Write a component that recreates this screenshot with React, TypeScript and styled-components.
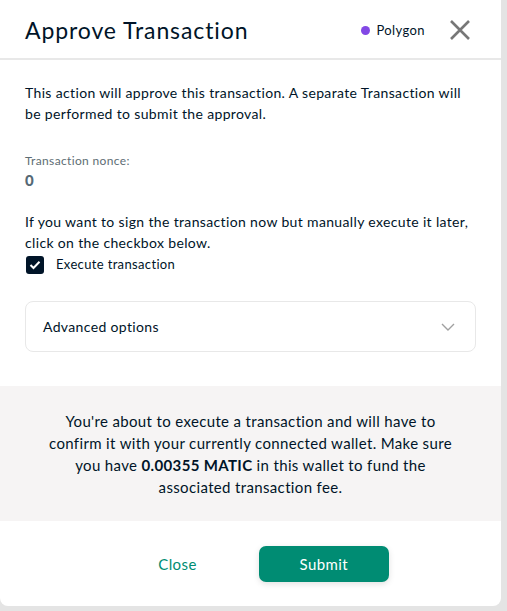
import React from 'react';
import styled, { createGlobalStyle } from 'styled-components';

const GlobalStyle = createGlobalStyle`
    html, body {
        margin: 0;
        padding: 0;
        background: #e4e4e4;
        font-family: Lato, "Open Sans", sans-serif;
        color: #001428;
    }
`;

const Page = styled.div`
    width: 507px;
    height: 611px;
    overflow: hidden;
`;

const Modal = styled.div`
    width: 501px;
    height: 606px;
    background: #fff;
    border-radius: 0 0 8px 8px;
    display: flex;
    flex-direction: column;
`;

const Header = styled.div`
    height: 56px;
    display: flex;
    align-items: center;
    padding: 2px 30px 0 25px;
    border-bottom: 2px solid #e8e8e8;
`;

const Title = styled.h1`
    flex: 1;
    margin: 0;
    font-size: 23px;
    font-weight: 400;
    letter-spacing: 0.9px;
`;

const Network = styled.div`
    display: flex;
    align-items: center;
    gap: 6px;
    font-size: 13px;
    letter-spacing: 0.4px;
    margin-right: 24px;
`;

const Dot = styled.span`
    width: 9px;
    height: 9px;
    border-radius: 50%;
    background: #8248e5;
`;

const CloseIcon = styled.button`
    border: 0;
    background: none;
    padding: 0;
    width: 22px;
    height: 22px;
    display: flex;
    cursor: pointer;
`;

const Body = styled.div`
    padding: 22px 25px 34px;
    font-size: 14px;
    line-height: 21px;
    letter-spacing: 0.35px;
`;

const Paragraph = styled.p`
    margin: 0;
`;

const Label = styled.div`
    margin-top: 28px;
    font-size: 12px;
    color: #5d6d74;
    line-height: 18px;
`;

const Nonce = styled.div`
    font-weight: 900;
    color: #566976;
    font-size: 15px;
    margin-bottom: 20px;
`;

const CheckRow = styled.label`
    display: flex;
    align-items: center;
    gap: 12px;
    margin-top: 1px;
    font-size: 13px;
`;

const Box = styled.span`
    width: 18px;
    height: 18px;
    margin-left: 1px;
    border-radius: 3px;
    background: #001428;
    display: flex;
    align-items: center;
    justify-content: center;
`;

const Accordion = styled.div`
    margin-top: 26px;
    height: 49px;
    border: 1px solid #e8e8e8;
    border-radius: 8px;
    display: flex;
    align-items: center;
    justify-content: space-between;
    padding: 0 20px 0 17px;
    font-size: 14px;
`;

const Notice = styled.div`
    background: #f6f4f4;
    height: 135px;
    display: flex;
    align-items: center;
    justify-content: center;
    text-align: center;
    padding: 0 44px;
    font-size: 15px;
    line-height: 22px;
    letter-spacing: 0.35px;
`;

const Footer = styled.div`
    flex: 1;
    display: flex;
    align-items: center;
    justify-content: center;
    gap: 56px;
    padding-left: 40px;
`;

const TextButton = styled.button`
    border: 0;
    background: none;
    color: #008c73;
    font-family: inherit;
    font-size: 15px;
    letter-spacing: 0.4px;
    cursor: pointer;
`;

const PrimaryButton = styled.button`
    width: 130px;
    height: 36px;
    border: 0;
    border-radius: 7px;
    background: #008c73;
    color: #fff;
    font-family: inherit;
    font-size: 15px;
    letter-spacing: 0.4px;
    box-shadow: 0 2px 6px rgba(0, 0, 0, 0.12);
    cursor: pointer;
`;

export default function App() {
    return (
        <Page>
            <GlobalStyle />
            <Modal>
                <Header>
                    <Title>Approve Transaction</Title>
                    <Network>
                        <Dot />
                        Polygon
                    </Network>
                    <CloseIcon>
                        <svg width="22" height="22" viewBox="0 0 22 22">
                            <path d="M2 2 L20 20 M20 2 L2 20" stroke="#777" strokeWidth="2.6" />
                        </svg>
                    </CloseIcon>
                </Header>
                <Body>
                    <Paragraph>
                        This action will approve this transaction. A separate Transaction will be performed to submit
                        the approval.
                    </Paragraph>
                    <Label>Transaction nonce:</Label>
                    <Nonce>0</Nonce>
                    <Paragraph>
                        If you want to sign the transaction now but manually execute it later, click on the checkbox
                        below.
                    </Paragraph>
                    <CheckRow>
                        <Box>
                            <svg width="12" height="10" viewBox="0 0 12 10">
                                <path d="M1.5 5 L4.5 8 L10.5 1.8" stroke="#fff" strokeWidth="2" fill="none" />
                            </svg>
                        </Box>
                        Execute transaction
                    </CheckRow>
                    <Accordion>
                        Advanced options
                        <svg width="14" height="8" viewBox="0 0 14 8">
                            <path d="M1 1 L7 7 L13 1" stroke="#a0a0a0" strokeWidth="1.4" fill="none" />
                        </svg>
                    </Accordion>
                </Body>
                <Notice>
                    <span>
                        You're about to execute a transaction and will have to confirm it with your currently
                        connected wallet. Make sure you have <b>0.00355 MATIC</b> in this wallet to fund the
                        associated transaction fee.
                    </span>
                </Notice>
                <Footer>
                    <TextButton>Close</TextButton>
                    <PrimaryButton>Submit</PrimaryButton>
                </Footer>
            </Modal>
        </Page>
    );
}
